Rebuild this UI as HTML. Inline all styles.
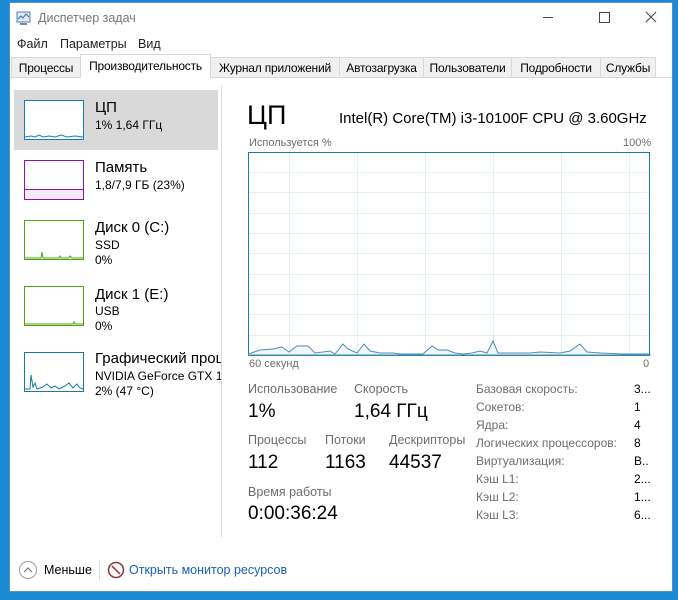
<!DOCTYPE html>
<html><head><meta charset="utf-8"><style>
*{margin:0;padding:0;box-sizing:border-box}
body{width:678px;height:600px;background:#1a8ad4;position:relative;overflow:hidden;font-family:"Segoe UI","Liberation Sans","DejaVu Sans",sans-serif;color:#000}
.win{position:absolute;left:9px;top:2px;width:664px;height:590px;background:#fff;border:1px solid #5a8ec0}
.a{position:absolute;white-space:nowrap}
.g{color:#6d6d6d}
.tab{position:absolute;top:57px;height:21px;background:#f0f0f0;border:1px solid #d9d9d9;font-size:12px;letter-spacing:-0.2px;padding:3px 0 0 0;text-align:center}
.thumb{position:absolute;left:24px;width:60px;height:40px;background:#fff;border:1px solid}
.t1{font-size:15px}
.t2{font-size:12px}
.lbl{font-size:12.5px;color:#6d6d6d}
.big{font-size:19px}
.r{font-size:12px;color:#6d6d6d}
.rv{font-size:12px}
</style></head><body>
<div class="win"></div>
<!-- title -->
<svg class="a" style="left:16px;top:10px" width="16" height="16" viewBox="0 0 16 16"><rect x="1" y="2" width="13" height="10" fill="#dfe9f3" stroke="#5b7fa6"/><polyline points="2,9 5,6 7,8 10,4 13,7" fill="none" stroke="#2c6fb0"/><rect x="4" y="13" width="7" height="2" fill="#7a8ea3"/></svg>
<div class="a g" style="left:38px;top:11px;font-size:12.5px;color:#777">Диспетчер задач</div>
<div class="a" style="left:543px;top:17px;width:10px;height:1px;background:#444"></div>
<div class="a" style="left:599px;top:12px;width:11px;height:11px;border:1px solid #444"></div>
<svg class="a" style="left:645px;top:11px" width="12" height="12"><path d="M1 1L11 11M11 1L1 11" stroke="#444" stroke-width="1"/></svg>
<!-- menu -->
<div class="a" style="left:17px;top:37px;font-size:12.5px;color:#222">Файл</div>
<div class="a" style="left:60px;top:37px;font-size:12.5px;color:#222">Параметры</div>
<div class="a" style="left:138px;top:37px;font-size:12.5px;color:#222">Вид</div>
<!-- tabs -->
<div class="a" style="left:10px;top:77px;width:662px;height:1px;background:#d9d9d9"></div>
<div class="tab" style="left:11px;width:70px">Процессы</div>
<div class="tab" style="left:80px;top:54px;height:24px;width:131px;background:#fff;border-bottom-color:#fff;padding-top:4px">Производительность</div>
<div class="tab" style="left:210px;width:130px">Журнал приложений</div>
<div class="tab" style="left:339px;width:85px">Автозагрузка</div>
<div class="tab" style="left:423px;width:89px">Пользователи</div>
<div class="tab" style="left:511px;width:90px">Подробности</div>
<div class="tab" style="left:600px;width:56px">Службы</div>
<!-- left pane -->
<div class="a" style="left:14px;top:90px;width:204px;height:60px;background:#d9d9d9"></div>
<div class="a" style="left:221px;top:85px;width:1px;height:452px;background:#dcdcdc"></div>

<div class="thumb" style="top:100px;border-color:#117dbb"><svg width="58" height="38"><polyline points="0,36 6,35 10,36 14,34 18,36 24,35 30,36 36,34 42,36 50,35 58,36" fill="none" stroke="#117dbb"/></svg></div>
<div class="a t1" style="left:95px;top:99px">ЦП</div>
<div class="a t2" style="left:95px;top:118px">1% 1,64 ГГц</div>

<div class="thumb" style="top:160px;border-color:#8b12ae;height:40px"><div style="position:absolute;left:0;top:28px;width:58px;height:10px;background:#f4eaf8;border-top:1px solid #8b12ae"></div></div>
<div class="a t1" style="left:95px;top:159px">Память</div>
<div class="a t2" style="left:95px;top:178px">1,8/7,9 ГБ (23%)</div>

<div class="thumb" style="top:220px;border-color:#4da60c"><svg width="58" height="38"><polyline points="0,37 16,37 17,31 18,37 34,37 35,35 36,37 44,37 45,35 47,37 58,37" fill="none" stroke="#4da60c"/></svg></div>
<div class="a t1" style="left:95px;top:219px">Диск 0 (C:)</div>
<div class="a t2" style="left:95px;top:238px">SSD</div>
<div class="a t2" style="left:95px;top:253px">0%</div>

<div class="thumb" style="top:286px;border-color:#4da60c"><svg width="58" height="38"><polyline points="0,37 48,37 49,35 50,37 58,37" fill="none" stroke="#4da60c"/></svg></div>
<div class="a t1" style="left:95px;top:286px">Диск 1 (E:)</div>
<div class="a t2" style="left:95px;top:304px">USB</div>
<div class="a t2" style="left:95px;top:319px">0%</div>

<div class="thumb" style="top:352px;border-color:#1b7a9a"><svg width="58" height="38"><polyline points="0,36 5,36 6,22 8,34 10,30 12,36 18,34 22,31 26,35 30,33 34,36 40,33 44,30 48,35 52,31 55,35 58,36" fill="none" stroke="#1b7a9a"/></svg></div>
<div class="a" style="left:95px;top:350px;font-size:15px;width:126px;overflow:hidden">Графический процессор</div>
<div class="a t2" style="left:95px;top:369px;width:126px;overflow:hidden">NVIDIA GeForce GTX 1650</div>
<div class="a t2" style="left:95px;top:384px">2% (47 °C)</div>

<!-- right pane -->
<div class="a" style="left:247px;top:99px;font-size:27px;line-height:32px">ЦП</div>
<div class="a" style="left:339px;top:110px;font-size:15px">Intel(R) Core(TM) i3-10100F CPU @ 3.60GHz</div>
<div class="a lbl" style="left:249px;top:137px;font-size:11px">Используется %</div>
<div class="a lbl" style="left:623px;top:137px;font-size:11px">100%</div>
<svg class="a" style="left:248px;top:152px" width="403" height="204" viewBox="248 152 403 204">
<rect x="248.5" y="152.5" width="401" height="203" fill="#fff" stroke="#117dbb"/>
<g stroke="#e3eff7" stroke-width="1">
<line x1="289.5" y1="153" x2="289.5" y2="355"/><line x1="357.5" y1="153" x2="357.5" y2="355"/><line x1="425.5" y1="153" x2="425.5" y2="355"/><line x1="493.5" y1="153" x2="493.5" y2="355"/><line x1="561.5" y1="153" x2="561.5" y2="355"/><line x1="629.5" y1="153" x2="629.5" y2="355"/>
<line x1="249" y1="172.5" x2="649" y2="172.5"/><line x1="249" y1="192.5" x2="649" y2="192.5"/><line x1="249" y1="213.5" x2="649" y2="213.5"/><line x1="249" y1="233.5" x2="649" y2="233.5"/><line x1="249" y1="253.5" x2="649" y2="253.5"/><line x1="249" y1="274.5" x2="649" y2="274.5"/><line x1="249" y1="294.5" x2="649" y2="294.5"/><line x1="249" y1="314.5" x2="649" y2="314.5"/><line x1="249" y1="335.5" x2="649" y2="335.5"/>
</g>
<polygon fill="#f1f6fa" stroke="#4a8fb0" stroke-width="1" points="248,354 260,350 273,349 282,347 289,352 297,346 308,346 315,353 323,352 330,351 335,354 343,344 348,349 357,353 364,344 370,351 380,353 393,353 400,354 423,354 432,346 438,350 447,350 455,353 463,354 472,353 480,351 487,353 493,341 498,353 517,353 530,353 540,352 560,353 570,351 580,344 587,352 600,353 623,354 650,354 650,355 248,355"/>
</svg>
<div class="a lbl" style="left:249px;top:358px;font-size:11px">60 секунд</div>
<div class="a lbl" style="left:643px;top:358px;font-size:11px">0</div>

<div class="a lbl" style="left:248px;top:382px">Использование</div>
<div class="a lbl" style="left:354px;top:382px">Скорость</div>
<div class="a big" style="left:248px;top:401px">1%</div>
<div class="a big" style="left:354px;top:401px">1,64 ГГц</div>
<div class="a lbl" style="left:248px;top:433px">Процессы</div>
<div class="a lbl" style="left:325px;top:433px">Потоки</div>
<div class="a lbl" style="left:389px;top:433px">Дескрипторы</div>
<div class="a big" style="left:248px;top:452px">112</div>
<div class="a big" style="left:325px;top:452px">1163</div>
<div class="a big" style="left:389px;top:452px">44537</div>
<div class="a lbl" style="left:248px;top:485px">Время работы</div>
<div class="a big" style="left:248px;top:503px">0:00:36:24</div>

<div class="a r" style="left:476px;top:382px">Базовая скорость:</div><div class="a rv" style="left:634px;top:382px">3...</div>
<div class="a r" style="left:476px;top:400px">Сокетов:</div><div class="a rv" style="left:634px;top:400px">1</div>
<div class="a r" style="left:476px;top:418px">Ядра:</div><div class="a rv" style="left:634px;top:418px">4</div>
<div class="a r" style="left:476px;top:436px">Логических процессоров:</div><div class="a rv" style="left:634px;top:436px">8</div>
<div class="a r" style="left:476px;top:454px">Виртуализация:</div><div class="a rv" style="left:634px;top:454px">В..</div>
<div class="a r" style="left:476px;top:472px">Кэш L1:</div><div class="a rv" style="left:634px;top:472px">2...</div>
<div class="a r" style="left:476px;top:490px">Кэш L2:</div><div class="a rv" style="left:634px;top:490px">1...</div>
<div class="a r" style="left:476px;top:508px">Кэш L3:</div><div class="a rv" style="left:634px;top:508px">6...</div>

<!-- footer -->
<svg class="a" style="left:18px;top:560px" width="20" height="20"><circle cx="10" cy="10" r="8.5" fill="none" stroke="#999"/><polyline points="6,12 10,8 14,12" fill="none" stroke="#777" stroke-width="1.2"/></svg>
<div class="a" style="left:44px;top:563px;font-size:12.5px">Меньше</div>
<div class="a" style="left:99px;top:560px;width:1px;height:20px;background:#ddd"></div>
<svg class="a" style="left:107px;top:561px" width="18" height="18"><circle cx="9" cy="9" r="7.5" fill="#fff" stroke="#8a3a3a" stroke-width="1.5"/><line x1="5" y1="5" x2="13" y2="13" stroke="#b02020" stroke-width="1.5"/></svg>
<div class="a" style="left:129px;top:563px;font-size:12.5px;color:#1a5fb4">Открыть монитор ресурсов</div>
</body></html>
